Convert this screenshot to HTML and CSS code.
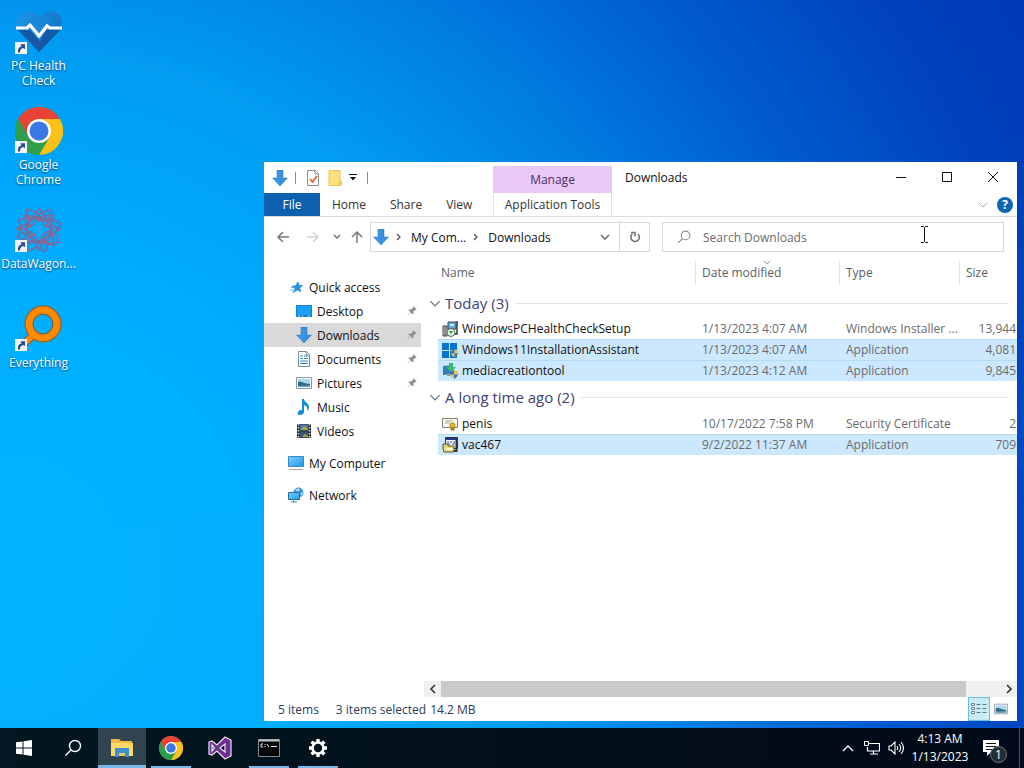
FILE: index.html
```html
<!DOCTYPE html>
<html lang="en">
<head>
<meta charset="utf-8">
<title>Downloads</title>
<link rel="stylesheet" href="styles.css">
</head>
<body>
<svg class="defs" aria-hidden="true">
  <defs>
    <linearGradient id="g-arrow" x1="0" x2="1"><stop offset="0" stop-color="#3c9bea"/><stop offset="1" stop-color="#3489d6"/></linearGradient>
    <linearGradient id="g-heart" x1="0" y1="0" x2="1" y2="0"><stop offset="0" stop-color="#1c93e6"/><stop offset="1" stop-color="#1478cc"/></linearGradient>
    <linearGradient id="g-screen" x1="0" y1="0" x2="1" y2="1"><stop offset="0" stop-color="#7fd0ff"/><stop offset="1" stop-color="#2196ea"/></linearGradient>
    <symbol id="i-down" viewBox="0 0 16 16"><path d="M5 0h6v8h4.500L8 16 .5 8H5z" fill="url(#g-arrow)" stroke="#2d75b8" stroke-width=".5"/></symbol>
    <symbol id="i-chrome" viewBox="0 0 48 48">
      <circle cx="24" cy="24" r="24" fill="#2f9e4c"/>
      <path d="M24 24L3.200 12A24 24 0 0 1 44.800 12z" fill="#ea4235"/>
      <path d="M24 12h20.800A24 24 0 0 1 24 48l10.400-18z" fill="#fbc116"/>
      <path d="M3.200 12L13.600 30 24 24V12z" fill="#ea4235"/>
      <path d="M3.200 12L13.600 30 24 34 34.400 30 24 48A24 24 0 0 1 3.200 12z" fill="#2f9e4c"/>
      <circle cx="24" cy="24" r="12" fill="#fff"/><circle cx="24" cy="24" r="9.500" fill="#3b78e7"/>
    </symbol>
    <symbol id="i-shortcut" viewBox="0 0 12 12"><path d="M0 0h12v12H0z" fill="#f4f4f6"/><path d="M3 10.500C2.500 7 4 5 6.500 4.600L5.500 2.200H10v5L8.300 5.900C6 6.200 5 8 5 10.500z" fill="#2a4a94"/></symbol>
    <symbol id="i-pin" viewBox="0 0 10 10"><path d="M6.500.3l3.200 3.200-1 .6-.5-.1-1.800 1.800.1 1.900-.8.800-2-2L.6 9.600l-.3-.3 3.100-3.100-2-2 .8-.8 1.900.1L6 1.700l-.1-.6z" fill="#8f8f94"/></symbol>
    <symbol id="i-picture" viewBox="0 0 16 12"><path d="M.5.5h15v11H.5z" fill="#fff" stroke="#8b98a4"/><path d="M2 2h12v8H2z" fill="#a8d8f4"/><path d="M2 5c4-1 6 2 12 2v3H2z" fill="#35677d"/><path d="M2 9c4-1 8 0 12-1v2H2z" fill="#5e9ec4"/></symbol>
    <symbol id="i-chev" viewBox="0 0 10 6"><path d="M1 1l4 4 4-4" fill="none" stroke="currentColor"/></symbol>
    <symbol id="i-next" viewBox="0 0 5 8"><path d="M1 1l3 3-3 3" fill="none" stroke="currentColor" stroke-width="1.300"/></symbol>
    <symbol id="i-lens" viewBox="0 0 18 18"><circle cx="11" cy="7" r="5.500" fill="none" stroke="currentColor" stroke-width="1.400"/><path d="M7 11l-5.500 5.500" stroke="currentColor" stroke-width="1.500"/></symbol>
    <symbol id="i-monitor" viewBox="0 0 16 16"><path d="M.5 1.500h15v10H.5z" fill="url(#g-screen)" stroke="#3687c4"/><path d="M1 14.500h14" stroke="#9fa0b8"/></symbol>
    <symbol id="i-shield" viewBox="0 0 8 9"><path d="M4 0l4 1.300V5Q7 8 4 9 1 8 0 5V1.300z" fill="#e6c65a"/><path d="M4 0v4.500H0V1.300zM4 4.500h4Q7 8 4 9z" fill="#3975b5"/></symbol>
  </defs>
</svg>

<main class="desktop">
  <svg class="rays" viewBox="0 0 1024 728" preserveAspectRatio="none" aria-hidden="true"><path d="M0 0L0 30 420 190 1024 470V400z" /><path d="M0 545L270 505V728H0z"/></svg>
  <ul class="shortcuts">
    <li><a href="#"><span class="pic"><svg viewBox="0 0 48 48"><path d="M24 44L3 22C-2 13 4 4 13 4c5 0 9 2 11 5 4-4 8-6 12-6 9 0 14 10 9 19z" fill="url(#g-heart)"/><path d="M3 22h12l10 11 6-11h14L24 44z" fill="#1458a6"/><path d="M1 20h11l3-3 5 6 4 5 8-10 3 2h12" fill="none" stroke="#fff" stroke-width="3.200"/></svg><svg class="mark"><use href="#i-shortcut"/></svg></span>PC Health Check</a></li>
    <li><a href="#"><span class="pic"><svg><use href="#i-chrome"/></svg><svg class="mark"><use href="#i-shortcut"/></svg></span>Google Chrome</a></li>
    <li><a href="#"><span class="pic"><svg viewBox="0 0 48 48"><g fill="none" stroke="#7a6aa0" stroke-width="1.500"><path d="M12 3l12 5 12-5 1 10 9 5-6 8 5 10-11 1-4 9-8-5-9 4-2-10-9-4 5-8-4-9 9-2z"/><path d="M24 2L11 22l13 22 13-22zM2 23l20-12 23 12-23 13zM9 9l26 5 4 25-25-4zM38 8L13 14 9 38l25-4z"/><path d="M24 9l4 9 10 5-10 5-4 10-5-10-10-5 10-5z"/></g><circle cx="24" cy="23" r="3" fill="#28a7ee"/><g fill="#c4536a"><circle cx="14" cy="12" r="1.500"/><circle cx="34" cy="12" r="1.500"/><circle cx="37" cy="29" r="1.500"/><circle cx="15" cy="20" r="1.500"/><circle cx="30" cy="36" r="1.500"/><circle cx="24" cy="14" r="1.500"/><circle cx="31" cy="20" r="1.500"/><circle cx="19" cy="29" r="1.500"/><circle cx="6" cy="22" r="1.500"/></g></svg><svg class="mark"><use href="#i-shortcut"/></svg></span>DataWagon...</a></li>
    <li><a href="#"><span class="pic"><svg viewBox="0 0 48 48"><path d="M18 30L5 43" stroke="#8c5626" stroke-width="8"/><circle cx="28" cy="19" r="14" fill="none" stroke="#8c5626" stroke-width="9"/><path d="M20 28L5 43" stroke="#ff8a00" stroke-width="6"/><circle cx="28" cy="19" r="14" fill="none" stroke="#ff8a00" stroke-width="7"/></svg><svg class="mark"><use href="#i-shortcut"/></svg></span>Everything</a></li>
  </ul>

  <section class="window" aria-label="Downloads">
    <header class="titlebar">
      <div class="qat">
        <svg class="s16"><use href="#i-down"/></svg><i class="bar"></i>
        <button aria-label="Properties"><svg class="s16" viewBox="0 0 16 16"><path d="M2.500.5h8l3 3v12h-11z" fill="#fff" stroke="#928b8d"/><path d="M10 .5v3.500h3.500" fill="none" stroke="#928b8d"/><path d="M5 9l2.500 3L12 6" fill="none" stroke="#d8683c" stroke-width="1.800"/></svg></button>
        <button aria-label="New folder"><svg class="s16" viewBox="0 0 16 16"><path d="M2 .5h11V11h1.500v3.500l-1 1H2z" fill="#ffe07c" stroke="#e9c650"/><path d="M11.500 11.500h2.500v3l-1 1h-1.500z" fill="#f4cc58"/></svg></button>
        <button class="narrow" aria-label="Customize"><svg viewBox="0 0 8 7" width="8" height="7"><path d="M0 .5h8" stroke="#111"/><path d="M1 3h6L4 6.500z" fill="#111"/></svg></button><i class="bar"></i>
      </div>
      <div class="manage">Manage</div>
      <h1>Downloads</h1>
      <div class="caption">
        <button aria-label="Minimize"><svg viewBox="0 0 12 12"><path d="M1 6.500h10" /></svg></button>
        <button aria-label="Maximize"><svg viewBox="0 0 12 12"><path d="M1.500 1.500h9v9h-9z"/></svg></button>
        <button aria-label="Close"><svg viewBox="0 0 12 12"><path d="M1 1l10 10M11 1L1 11"/></svg></button>
      </div>
    </header>
    <nav class="ribbon">
      <div class="tabs"><button class="file">File</button><button>Home</button><button>Share</button><button>View</button></div>
      <button class="tools">Application Tools</button>
      <div class="help"><button aria-label="Expand ribbon"><svg width="10" height="6"><use href="#i-chev"/></svg></button><button class="q" aria-label="Help">?</button></div>
    </nav>
    <div class="navbar">
      <div class="arrows">
        <button aria-label="Back"><svg viewBox="0 0 14 14"><path d="M13 7H2M7 2L2 7l5 5"/></svg></button>
        <button class="off" aria-label="Forward"><svg viewBox="0 0 14 14"><path d="M1 7h11M7 2l5 5-5 5"/></svg></button>
        <button class="small" aria-label="Recent"><svg viewBox="0 0 14 14"><path d="M4 5l3 3 3-3"/></svg></button>
        <button class="up" aria-label="Up"><svg viewBox="0 0 14 14"><path d="M7 13V2M2 7l5-5 5 5"/></svg></button>
      </div>
      <div class="address">
        <svg class="s16"><use href="#i-down"/></svg>
        <svg class="sep"><use href="#i-next"/></svg><a href="#">My Com...</a>
        <svg class="sep"><use href="#i-next"/></svg><a href="#">Downloads</a>
        <button class="drop" aria-label="Previous locations"><svg viewBox="0 0 10 6" width="10" height="6"><path d="M1 1l4 4 4-4" fill="none" stroke="#707070" stroke-width="1.600"/></svg></button>
        <button class="refresh" aria-label="Refresh"><svg viewBox="0 0 14 14" width="14" height="14"><path d="M10 4A4.300 4.300 0 1 1 4.500 3.800" fill="none" stroke="#707070" stroke-width="1.600"/><path d="M3 2.500h4v4" fill="none" stroke="#707070" stroke-width="1.500"/></svg></button>
      </div>
      <label class="search"><svg width="14" height="14"><use href="#i-lens"/></svg><input type="text" placeholder="Search Downloads" aria-label="Search Downloads"></label>
    </div>
    <div class="content">
      <nav class="tree">
        <a class="root" href="#"><svg viewBox="0 0 16 16"><path d="M10 2l1.300 4 4.200.2-3.300 2.800 1 4.500-3.700-2.300L5.500 14l1-4.500L3.500 7l4-.7z" fill="#2d92df"/><path d="M3 8.500h3M2 11h4M4 13h2" stroke="#75b4e0"/></svg>Quick access</a>
        <a href="#"><svg viewBox="0 0 16 16"><path d="M0 2h16v12H0z" fill="#1685d0"/><path d="M1 3h14v9H1z" fill="#17a0f6"/><path d="M2 13h2M6 13h1M12 13h2" stroke="#bde4ff"/></svg>Desktop<svg class="pin"><use href="#i-pin"/></svg></a>
        <a class="current" href="#"><svg><use href="#i-down"/></svg>Downloads<svg class="pin"><use href="#i-pin"/></svg></a>
        <a href="#"><svg viewBox="0 0 16 16"><path d="M2.500.5h8l3 3v12h-11z" fill="#fff" stroke="#77899a"/><path d="M4 5h3M8 5h4M4 7.500h3M8 7.500h4M4 10h8M4 12.500h8" stroke="#3489bf"/><path d="M10 .5v3.500h3.500" fill="none" stroke="#77899a"/></svg>Documents<svg class="pin"><use href="#i-pin"/></svg></a>
        <a href="#"><svg><use href="#i-picture"/></svg>Pictures<svg class="pin"><use href="#i-pin"/></svg></a>
        <a href="#"><svg viewBox="0 0 16 16"><path d="M6 0h2c0 3 5 4 5 8 0 2-1 3-2 4 1-4-1-5-3-6v7c0 2-2 3-4 3s-3-1-2-3 3-2 4-2z" fill="#168bd7"/></svg>Music</a>
        <a href="#"><svg viewBox="0 0 16 16"><path d="M1 1h14v14H1z" fill="#292c35"/><path d="M4 1.500h8v6H4z" fill="#537bab"/><path d="M4 8.500h8v6H4z" fill="#3e5678"/><path d="M5 7l3-4 4 3v1zM6 14l3-3 3 2v1z" fill="#a2a93c"/><path d="M2.500 1v14M13.500 1v14" stroke="#e4e4df" stroke-width="1.500" stroke-dasharray="1.500 1.500"/></svg>Videos</a>
        <a class="root group" href="#"><svg><use href="#i-monitor"/></svg>My Computer</a>
        <a class="root group" href="#"><svg viewBox="0 0 16 16"><circle cx="10.500" cy="5.500" r="5" fill="#3898d8"/><path d="M7 3q3-3 5-1l-2 3zM12 6l3-1-1 4z" fill="#9dd8f4"/><path d="M.5 5.500h11v7H.5z" fill="url(#g-screen)" stroke="#236ea9"/><path d="M3 15h6M5.500 12v3" stroke="#3c88bd"/></svg>Network</a>
      </nav>
      <div class="pane">
        <table>
          <colgroup><col class="c-name"><col class="c-date"><col class="c-type"><col class="c-size"></colgroup>
          <thead><tr><th>Name</th><th><span class="sorted">Date modified<svg width="8" height="5"><use href="#i-chev"/></svg></span></th><th>Type</th><th>Size</th></tr></thead>
          <tbody>
            <tr class="section first"><th colspan="4"><div><svg width="12" height="7"><use href="#i-chev"/></svg>Today (3)</div></th></tr>
            <tr><td><span><svg viewBox="0 0 16 16"><path d="M6 1h8v7H6z" fill="#5fa8dc" stroke="#414b58"/><path d="M8 3h4v2H8z" fill="#c4ecff"/><path d="M1 5h4v10H1z" fill="#e3e3dc" stroke="#3c3c3c"/><path d="M3 5v10" stroke="#3c3c3c"/><path d="M15 0v13H5" fill="none" stroke="#3a3a3a" stroke-width="1.500"/><circle cx="9" cy="11.500" r="4" fill="#e4f2e0" stroke="#4c735a"/><path d="M7 10l2 3 2-3z" fill="#1c9b46"/></svg>WindowsPCHealthCheckSetup</span></td><td>1/13/2023 4:07 AM</td><td>Windows Installer ...</td><td>13,944</td></tr>
            <tr class="sel"><td><span><svg viewBox="0 0 16 16"><path d="M0 1h7v7H0zM8 1h7v7H8zM0 9h7v7H0zM8 9h7v7H8z" fill="#0872cd"/><use href="#i-shield" x="9" y="7" width="7" height="9"/></svg>Windows11InstallationAssistant</span></td><td>1/13/2023 4:07 AM</td><td>Application</td><td>4,081</td></tr>
            <tr class="sel"><td><span><svg viewBox="0 0 16 16"><path d="M1 3l9-1v9l-9 1z" fill="#347db7"/><path d="M4 13h6l1-3" fill="#78919f"/><path d="M7 0h4v4h3L9 9 4 4h3z" fill="#39bd63"/><use href="#i-shield" x="8" y="7" width="8" height="9"/></svg>mediacreationtool</span></td><td>1/13/2023 4:12 AM</td><td>Application</td><td>9,845</td></tr>
            <tr class="section"><th colspan="4"><div><svg width="12" height="7"><use href="#i-chev"/></svg>A long time ago (2)</div></th></tr>
            <tr><td><span><svg viewBox="0 0 16 16"><path d="M.5 2.500h15v9H.5z" fill="#faf9ee" stroke="#7f8078"/><path d="M3 5h8M3 7h5" stroke="#aaa99e"/><path d="M8.500 10v5l2-1 2 1v-5" fill="#9b7a18"/><circle cx="10.500" cy="9.500" r="2.500" fill="#e3bd27" stroke="#a58217"/></svg>penis</span></td><td>10/17/2022 7:58 PM</td><td>Security Certificate</td><td>2</td></tr>
            <tr class="sel"><td><span><svg viewBox="0 0 16 16"><path d="M3.500.5h12v11h-12z" fill="#f4f4ee" stroke="#33332f"/><path d="M4 1h11v2H4z" fill="#253a8b"/><path d="M6 4v2M9 4v2M12 4v2M6 7h2M10 7h3" stroke="#34549e"/><path d="M1 7h5v2h6v6H2l-1-3z" fill="#e7db78" stroke="#55512c"/><path d="M4 11h7v2H4z" fill="#fff8c4"/><path d="M14.500 3v11H12" stroke="#333" stroke-width="2" fill="none"/></svg>vac467</span></td><td>9/2/2022 11:37 AM</td><td>Application</td><td>709</td></tr>
          </tbody>
        </table>
        <div class="scroll"><button aria-label="Scroll left"><svg viewBox="0 0 8 10"><path d="M6 1L2 5l4 4"/></svg></button><div class="track"><div class="thumb"></div></div><button aria-label="Scroll right"><svg viewBox="0 0 8 10"><path d="M2 1l4 4-4 4"/></svg></button></div>
      </div>
    </div>
    <footer class="status"><span>5 items</span><span class="picked">3 items selected</span><span>14.2 MB</span>
      <div class="views"><button class="on" aria-label="Details"><svg viewBox="0 0 16 12"><path d="M.5.500h3v2h-3zM.5 4.500h3v2h-3zM.5 8.500h3v2h-3z" fill="#fff" stroke="#73858d"/><path d="M5.500 1.500h4M11.500 1.500h4M5.500 5.500h4M11.500 5.500h4M5.500 9.500h4M11.500 9.500h4" stroke="#687980"/></svg></button><button aria-label="Thumbnails"><svg class="thumbs"><use href="#i-picture"/></svg></button></div>
    </footer>
  </section>
  <svg class="cursor" viewBox="0 0 9 17" aria-hidden="true"><path d="M1 .5h2.500l1 1 1-1H8M4.500 1.500v14M1 16.500h2.500l1-1 1 1H8" fill="none" stroke="#111"/></svg>
</main>

<footer class="taskbar">
  <div class="apps">
    <button aria-label="Start"><svg viewBox="0 0 16 16" width="16" height="16"><path d="M0 2.300L6.500 1.400V7.500H0zM7.500 1.200L16 0v7.500H7.500zM0 8.500h6.500v6.100L0 13.700zM7.500 8.500H16V16l-8.500-1.200z" fill="#fff"/></svg></button>
    <button aria-label="Search"><svg width="18" height="18"><use href="#i-lens"/></svg></button>
    <button class="active" aria-label="File Explorer"><svg viewBox="0 0 22 20" width="22" height="20"><path d="M0 1h8l2 2h11v15H0z" fill="#f2bd42"/><path d="M0 5h22v13H0z" fill="#ffd966"/><path d="M4 10h14v9h-4v-4H8v4H4z" fill="#3b8fd1"/><path d="M8 15h6v3H8z" fill="#f4c75a"/></svg></button>
    <button class="open" aria-label="Chrome"><svg width="24" height="24"><use href="#i-chrome"/></svg></button>
    <button aria-label="Visual Studio"><svg viewBox="0 0 24 24" width="24" height="24"><path fill-rule="evenodd" d="M1 6l3-1 5 4 8-8 6 3v16l-6 3-8-8-5 4-3-1zM4 9v6l2.500-3zM12 12l5 4V8z" fill="#68318f" stroke="#eee7f4" stroke-width="1.200"/></svg></button>
    <button class="open" aria-label="Command Prompt"><svg viewBox="0 0 22 18" width="22" height="18"><path d="M.5.500h21v17H.5z" fill="#080808" stroke="#838b90"/><path d="M1 1.500h20" stroke="#b8c3c9" stroke-width="2"/><path d="M5 5H3v3h2M7 5v1M7 7v1M9 5l2 3M13 7.500h6" stroke="#e0e0e0" fill="none"/></svg></button>
    <button class="open" aria-label="Settings"><svg viewBox="0 0 20 20" width="20" height="20"><circle cx="10" cy="10" r="5.500" fill="none" stroke="#fff" stroke-width="2.600"/><path d="M10 1v3M10 16v3M1 10h3M16 10h3M3.600 3.600l2.200 2.200M14.200 14.200l2.200 2.200M16.400 3.600l-2.200 2.200M5.800 14.200l-2.200 2.200" stroke="#fff" stroke-width="3.400"/></svg></button>
  </div>
  <div class="tray">
    <button aria-label="Hidden icons"><svg viewBox="0 0 12 8" width="12" height="8"><path d="M1 7l5-5 5 5" fill="none" stroke="#fff" stroke-width="1.300"/></svg></button>
    <button aria-label="Network"><svg viewBox="0 0 16 14" width="16" height="14"><path d="M5 2.500h10.500v7.500H3.500V6M9.500 10v3M6 13h8" fill="none" stroke="#fff" stroke-width="1.200"/><path d="M.5.500h4v4h-4z" fill="#07131c" stroke="#fff"/></svg></button>
    <button aria-label="Volume"><svg viewBox="0 0 16 14" width="16" height="14"><path d="M1 5h2l4-4v12L3 9H1zM9 5q1.500 2 0 4M11 3q3.500 4 0 8M13 1q5 6 0 12" fill="none" stroke="#fff" stroke-width="1.100"/></svg></button>
    <button class="clock"><time>4:13 AM</time><time>1/13/2023</time></button>
    <button class="notify" aria-label="Notifications"><svg viewBox="0 0 18 18" width="18" height="18"><path d="M1 1h16v12H9l-4 4v-4H1z" fill="#fff"/><path d="M4 4.500h10M4 7.500h10M4 10.500h7" stroke="#111"/></svg><span>1</span></button>
  </div>
</footer>
</body>
</html>
```
FILE: styles.css
```css
* { box-sizing: border-box; }
html, body { height: 100%; }
body { margin: 0; display: flex; flex-direction: column; overflow: hidden; font: 12px/15px "Open Sans", "Noto Sans", sans-serif; color: #111; }
button { border: 0; padding: 0; margin: 0; background: none; font: inherit; color: inherit; display: flex; align-items: center; justify-content: center; }
a { color: inherit; text-decoration: none; }
svg { flex: none; }
.defs { position: absolute; width: 0; height: 0; }
.s16 { width: 16px; height: 16px; }

.desktop { position: relative; flex: 1; min-height: 0; background: radial-gradient(ellipse 120% 160% at 0% 78%, #00b5ff 0%, #00adff 26%, #009df3 44%, #007fe2 58%, #005ccf 72%, #0040bb 88%, #0038b4 100%); }
.rays { position: absolute; inset: 0; width: 100%; height: 100%; }
.rays path { fill: #60ccff; opacity: .03; }

.shortcuts { position: absolute; top: 8px; left: 0; margin: 0; padding: 0; list-style: none; width: 77px; }
.shortcuts li { height: 99px; }
.shortcuts a { display: flex; flex-direction: column; align-items: center; text-align: center; color: #fff; text-shadow: 0 1px 2px #003c78; padding: 0 6px; }
.pic { position: relative; width: 48px; height: 48px; margin-bottom: 2px; }
.pic svg { width: 48px; height: 48px; }
.pic .mark { position: absolute; left: 0; bottom: 2px; width: 12px; height: 12px; }

.window { position: absolute; inset: 162px 7px 7px 263px; display: flex; flex-direction: column; background: #fff; border-left: 1px solid #1c9fd8; }
.titlebar, .ribbon { display: grid; grid-template-columns: 229px 119px 1fr auto; }
.titlebar { height: 31px; }
.qat { display: flex; align-items: center; padding-left: 8px; }
.qat .bar { width: 1px; height: 12px; background: #8c8c8c; margin: 0 6px 0 7px; }
.qat button { width: 22px; height: 22px; }
.qat .narrow { width: 14px; }
.manage { margin-top: 4px; background: #e9c9f8; color: #4d2d61; display: flex; align-items: center; justify-content: center; }
h1 { margin: 0; padding-left: 13px; font: inherit; line-height: 31px; }
.caption { display: flex; padding-right: 1px; }
.caption button { width: 46px; height: 30px; }
.caption svg { width: 12px; height: 12px; fill: none; stroke: #111; }
.ribbon { height: 24px; grid-template-columns: 229px 119px 1fr; border-bottom: 1px solid #d9dadc; color: #333; }
.tabs { display: flex; }
.tabs button { padding: 0 12px; }
.tabs .file { flex: none; width: 56px; background: #0c60ae; color: #fff; }
.tools { border: solid #e6e0ea; border-width: 0 1px; }
.help { display: flex; justify-content: flex-end; align-items: center; gap: 9px; padding-right: 4px; color: #aaa; }
.help .q { width: 16px; height: 16px; border-radius: 50%; background: #0c66b4; color: #fff; font-weight: bold; }

.navbar { height: 40px; display: flex; padding: 5px 13px 5px 5px; }
.arrows { display: flex; width: 101px; }
.arrows button { width: 28px; color: #777; }
.arrows svg { width: 14px; height: 14px; fill: none; stroke: currentColor; stroke-width: 1.500; }
.arrows .off { color: #d4d4d4; width: 32px; }
.arrows .small { width: 16px; }
.arrows .up { width: 24px; }
.address, .search { border: 1px solid #d9d9d9; display: flex; align-items: center; min-width: 0; }
.address { flex: 0 1 280px; padding-left: 2px; }
.address a { white-space: nowrap; }
.sep { width: 5px; height: 8px; margin: 0 10px 0 7px; color: #555; }
.drop { margin-left: auto; width: 28px; height: 28px; }
.refresh { width: 30px; height: 28px; border-left: 1px solid #d9d9d9; }
.search { flex: 1; margin-left: 12px; padding-left: 14px; gap: 12px; color: #888; }
.search input { flex: 1; min-width: 0; border: 0; outline: 0; padding: 0; background: none; font: inherit; color: #666; }
.search input::placeholder { color: #6b6b6b; opacity: 1; }

.content { flex: 1; min-height: 0; display: flex; }
.tree { width: 157px; padding-top: 18px; }
.tree a { display: flex; align-items: center; height: 24px; padding: 0 4px 0 32px; gap: 5px; }
.tree .root { padding-left: 24px; }
.tree .group { margin-top: 8px; }
.tree .current { background: #d9d9d9; }
.tree svg { width: 16px; height: 16px; }
.tree .pin { width: 10px; height: 10px; margin-left: auto; }
.pane { flex: 1; min-width: 0; display: flex; flex-direction: column; padding-left: 3px; }
table { border-collapse: separate; border-spacing: 0; table-layout: fixed; width: calc(100% - 14px); margin-left: 14px; color: #6b6b6b; }
.c-name { width: 258px; }
.c-date { width: 144px; }
.c-type { width: 120px; }
th, td { padding: 0 6px; text-align: left; font-weight: normal; white-space: nowrap; height: 21px; }
thead th { height: 31px; color: #5b5f66; background: linear-gradient(#e5e5e5, #e5e5e5) right center / 1px 25px no-repeat; }
thead th:first-child { padding-left: 3px; }
thead th:last-child { background: none; }
.sorted { position: relative; display: inline-block; }
.sorted svg { position: absolute; top: -5px; left: 61px; color: #777; }
.section th { height: 32px; padding: 0; font-size: 15px; line-height: 20px; color: #3d4276; }
.section.first th { height: 30px; }
.section div { display: flex; align-items: center; gap: 4px; margin-left: -9px; }
.section div::after { content: ""; flex: 1; height: 1px; margin: 0 8px 0 2px; background: #e2e5e9; }
.section svg { color: #66698a; }
td:first-child { padding-left: 4px; color: #111; }
td span { display: flex; align-items: center; gap: 4px; }
td span svg { width: 16px; height: 16px; }
td:last-child { text-align: right; padding-right: 1px; }
.sel td { background: #cce8ff; box-shadow: inset 0 1px #b4dbf5; }
.scroll { margin-top: auto; height: 16px; display: flex; background: #f0f0f0; }
.scroll button { width: 17px; }
.scroll svg { width: 8px; height: 10px; fill: none; stroke: #333; stroke-width: 1.600; }
.track { flex: 1; }
.thumb { width: 94%; height: 100%; background: #c9c9c9; }
.status { height: 24px; display: flex; align-items: center; padding-left: 14px; color: #2d3a5e; }
.picked { margin: 0 4px 0 17px; }
.views { margin-left: auto; display: flex; align-self: stretch; padding-right: 5px; }
.views button { width: 22px; border: 1px solid transparent; }
.views .on { background: #c9ebf5; border-color: #6fc0dc; }
.views svg { width: 16px; height: 12px; }
.views .thumbs { width: 14px; height: 12px; }
.cursor { position: absolute; left: 920px; top: 226px; width: 9px; height: 17px; }

.taskbar { height: 40px; flex: none; display: flex; justify-content: space-between; background: linear-gradient(90deg, #021721, #020d18 70%, #020b19); color: #fff; }
.apps { display: flex; gap: 1px; }
.apps button { width: 48px; }
.apps .active { background: #30444f; border-bottom: 3px solid #79b7e8; padding-top: 3px; }
.apps .open { background: linear-gradient(#79b7e8, #79b7e8) center bottom / 40px 2px no-repeat; }
.tray { display: flex; border-right: 1px solid #48515c; margin-right: 4px; }
.tray button { width: 24px; }
.tray .clock { flex-direction: column; width: 64px; line-height: 18px; }
.tray .notify { position: relative; width: 38px; margin-right: 9px; }
.notify span { position: absolute; left: 18px; top: 18px; width: 17px; height: 17px; border: 1px solid #777; border-radius: 50%; background: #222c35; line-height: 15px; }
```
